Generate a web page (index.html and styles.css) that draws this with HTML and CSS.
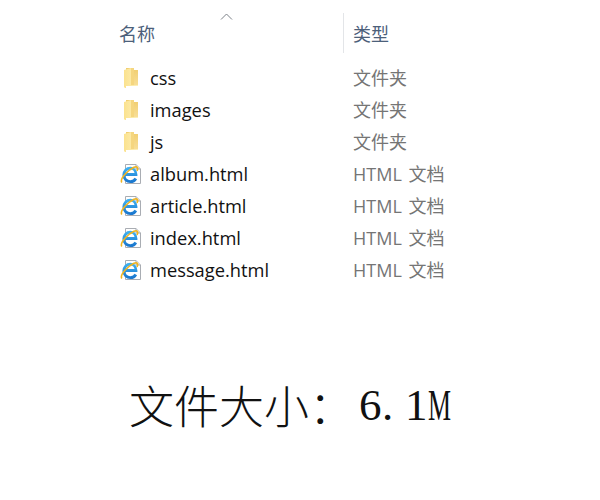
FILE: index.html
```html
<!DOCTYPE html>
<html lang="zh-CN">
<head>
<meta charset="utf-8">
<title>文件大小</title>
<link rel="stylesheet" href="styles.css">
</head>
<body>
<svg class="defs" width="0" height="0" aria-hidden="true">
  <defs>
    <linearGradient id="fold" x1="0" y1="0" x2="1" y2="0">
      <stop offset="0" stop-color="#fbe28e"/>
      <stop offset="1" stop-color="#fdf0bb"/>
    </linearGradient>
    <linearGradient id="back" x1="0" y1="0" x2="0" y2="1">
      <stop offset="0" stop-color="#f0cd6e"/>
      <stop offset="1" stop-color="#f8de96"/>
    </linearGradient>
    <linearGradient id="blue" x1="0" y1="0" x2="0" y2="1">
      <stop offset="0" stop-color="#3fb0f0"/>
      <stop offset="1" stop-color="#1a78cf"/>
    </linearGradient>
    <symbol id="folder" viewBox="0 0 22 22">
      <path d="M6 1 H14 V3 H18 V18 H6 Z" fill="url(#back)"/>
      <path d="M4 3 L11 1 H14 V18 H18 V19 H6 V21 H5 L4 20 Z" fill="url(#fold)"/>
      <path d="M11 1 H14 V18 H11 Z" fill="#f5d67f"/>
    </symbol>
    <symbol id="ie" viewBox="0 0 22 22">
      <path d="M5.500 1.500 H16 L20.500 6 V20.500 H5.500 Z" fill="#fff" stroke="#a9adb3"/>
      <path d="M16 1.500 V6 H20.500" fill="#e9ebee" stroke="#a9adb3"/>
      <path d="M4.500 11.500 H16 C16 7.500 13.500 5.200 10.300 5.200 C6.500 5.200 3.800 8.200 3.800 12 C3.800 15.800 6.700 18.600 10.300 18.600 C12.800 18.600 14.800 17.500 15.800 15.500" fill="none" stroke="url(#blue)" stroke-width="2.800"/>
      <path d="M1.800 19.500 C-0.500 16 8 7 14 4.300 C17.500 2.800 18.500 5 17 8" fill="none" stroke="#f0b41f" stroke-width="1.600"/>
    </symbol>
  </defs>
</svg>
<main class="explorer">
  <header class="head">
    <div class="col-name">名称<span class="sort"><svg width="13" height="7" viewBox="0 0 13 7"><path d="M1 6.500 L6.500 1 L12 6.500" fill="none" stroke="#7c8188"/></svg></span></div>
    <div class="col-type">类型</div>
  </header>
  <ul class="rows">
    <li class="row"><svg class="ico"><use href="#folder"/></svg><span class="name">css</span><span class="type">文件夹</span></li>
    <li class="row"><svg class="ico"><use href="#folder"/></svg><span class="name">images</span><span class="type">文件夹</span></li>
    <li class="row"><svg class="ico"><use href="#folder"/></svg><span class="name">js</span><span class="type">文件夹</span></li>
    <li class="row"><svg class="ico"><use href="#ie"/></svg><span class="name">album.html</span><span class="type">HTML 文档</span></li>
    <li class="row"><svg class="ico"><use href="#ie"/></svg><span class="name">article.html</span><span class="type">HTML 文档</span></li>
    <li class="row"><svg class="ico"><use href="#ie"/></svg><span class="name">index.html</span><span class="type">HTML 文档</span></li>
    <li class="row"><svg class="ico"><use href="#ie"/></svg><span class="name">message.html</span><span class="type">HTML 文档</span></li>
  </ul>
</main>
<p class="size">文件大小：<span class="ch six">6</span><span class="ch">.</span><span class="ch">1</span><span class="ch m">M</span></p>
</body>
</html>
```

FILE: styles.css
```css
html, body { margin: 0; padding: 0; background: #fff; }
body { width: 600px; height: 500px; overflow: hidden; font-family: "Open Sans", "Noto Sans CJK SC", sans-serif; }
.defs { position: absolute; }
.explorer { padding: 13px 0 0 119px; }
.head { display: flex; height: 40px; align-items: center; font-size: 18px; color: #4c607a; }
.col-name { position: relative; width: 224px; height: 40px; line-height: 40px; font-family: "Noto Sans CJK SC", sans-serif; font-weight: 400; }
.sort { position: absolute; left: 101px; top: -1px; line-height: 0; }
.col-type { height: 40px; line-height: 40px; border-left: 1px solid #e3e5e8; padding-left: 9px; font-family: "Noto Sans CJK SC", sans-serif; font-weight: 400; }
.rows { list-style: none; margin: 9px 0 0; padding: 0; }
.row { display: flex; align-items: center; height: 32px; }
.ico { width: 22px; height: 22px; margin: 0 8px 0 1px; flex: none; }
.name { width: 203px; font-size: 18.300px; line-height: 30px; color: #111; }
.type { font-size: 18px; line-height: 30px; word-spacing: 2px; color: #757575; font-weight: 400; }
.size { margin: 89px 0 0 129px; font-size: 45px; line-height: 60px; color: #111; font-family: "Noto Sans CJK JP", sans-serif; font-weight: 200; white-space: nowrap; display: flex; }
.ch { display: inline-block; width: 23px; font-family: "Liberation Serif", serif; }
.six { margin-left: 5px; }
.m { transform: scaleX(.575); transform-origin: left center; }
```
